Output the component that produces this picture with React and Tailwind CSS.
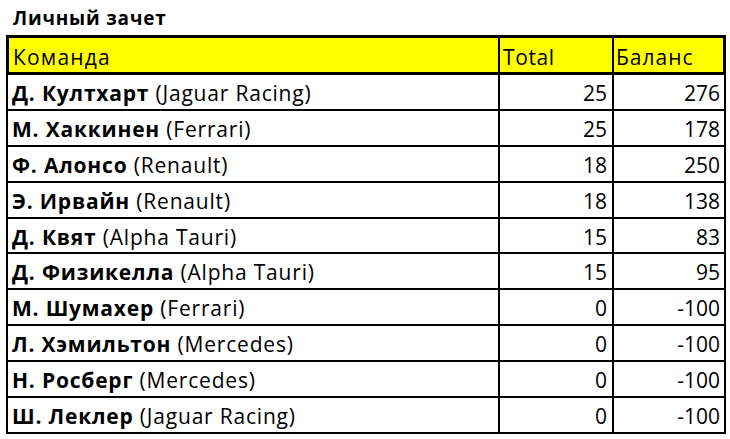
import React from "react";

const rows = [
  ["Д. Култхарт", "(Jaguar Racing)", 25, 276],
  ["М. Хаккинен", "(Ferrari)", 25, 178],
  ["Ф. Алонсо", "(Renault)", 18, 250],
  ["Э. Ирвайн", "(Renault)", 18, 138],
  ["Д. Квят", "(Alpha Tauri)", 15, 83],
  ["Д. Физикелла", "(Alpha Tauri)", 15, 95],
  ["М. Шумахер", "(Ferrari)", 0, -100],
  ["Л. Хэмильтон", "(Mercedes)", 0, -100],
  ["Н. Росберг", "(Mercedes)", 0, -100],
  ["Ш. Леклер", "(Jaguar Racing)", 0, -100],
];

export default function App() {
  return (
    <div className="w-[730px] h-[439px] bg-white text-black font-['Open_Sans',sans-serif] overflow-hidden">
      <div className="h-[35px] pl-[13px] pt-[6px] text-[19px] leading-[24px] font-bold tracking-[0.8px]">Личный зачет</div>
      <div className="ml-[6px] w-[720px]">
        <div className="flex h-[40px] border-[3px] border-black bg-[#ffff00] text-[21px] leading-[26px]">
          <div className="w-[489px] pl-[4px] pt-[6px] tracking-[1.2px]">Команда</div>
          <div className="w-[114px] border-l-2 border-black pl-[3px] pt-[6px] tracking-[0.6px]">Total</div>
          <div className="flex-1 border-l-2 border-black pl-[2px] pt-[6px] tracking-[1px]">Баланс</div>
        </div>
        {rows.map(([b, n, t, s], i) => (
          <div key={i} className="flex h-[35.9px] border-x-2 border-b-2 border-black text-[21px] leading-[26px]">
            <div className="w-[490px] pl-[4px] pt-[2px] flex items-center tracking-[0.8px]">
              <span className="whitespace-pre"><span className="font-bold">{b}</span> {n}</span>
            </div>
            <div className="w-[114px] border-l-2 border-black pr-[5px] pt-[2px] flex items-center justify-end">{t}</div>
            <div className="flex-1 border-l-2 border-black pr-[4px] pt-[2px] flex items-center justify-end">{s}</div>
          </div>
        ))}
      </div>
    </div>
  );
}
